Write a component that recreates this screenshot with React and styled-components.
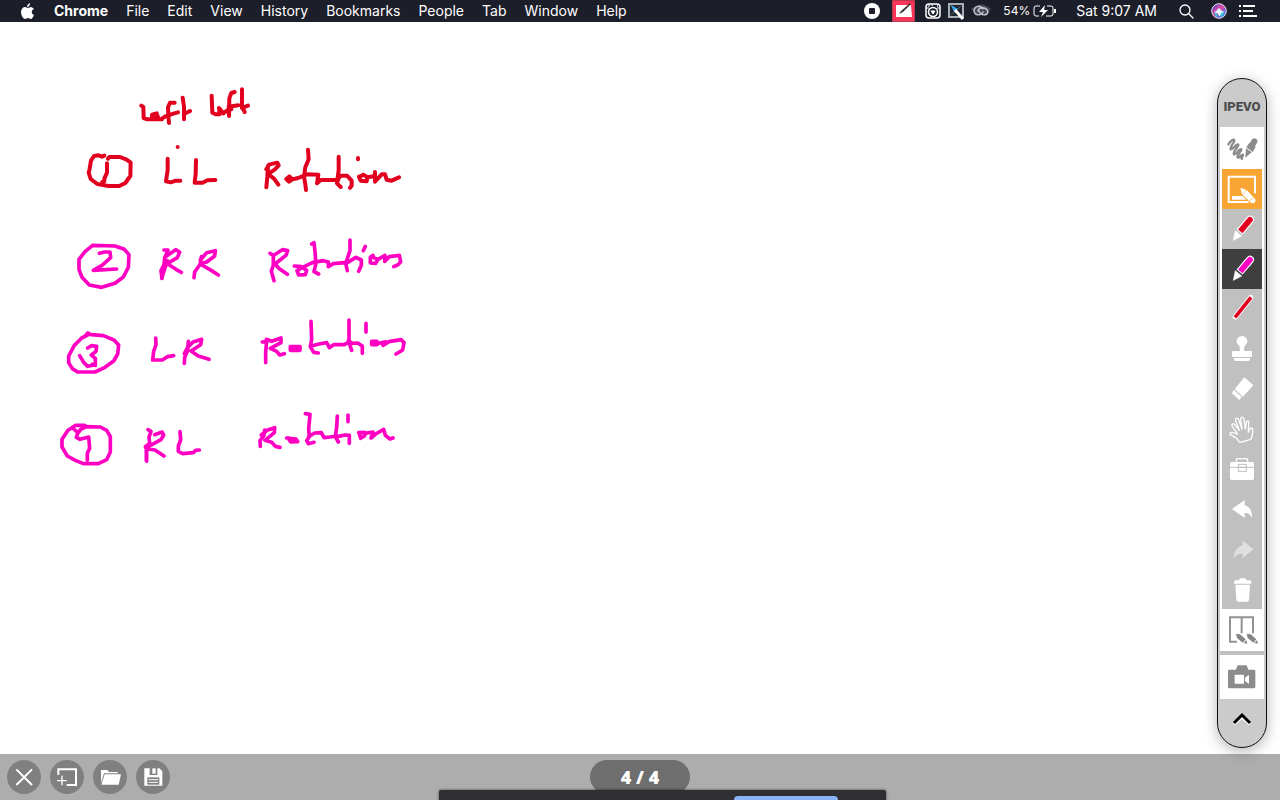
import React from "react";
import styled, { createGlobalStyle } from "styled-components";

const GlobalStyle = createGlobalStyle`
  * { box-sizing: border-box; }
  body { margin: 0; background: #fff; font-family: Inter, "Liberation Sans", sans-serif; }
  button { border: 0; padding: 0; font: inherit; color: inherit; background: none; cursor: pointer; }
  svg { display: block; flex: none; }
`;

const Screen = styled.div`
  position: relative;
  min-height: 100vh;
  display: flex;
  flex-direction: column;
  overflow: hidden;
`;

const MenuBar = styled.header`
  display: flex;
  align-items: center;
  justify-content: space-between;
  height: 22px;
  padding: 0 23px 0 20px;
  background: #1c1e29;
  color: #fff;
  font-size: 14px;
  line-height: 22px;
  white-space: nowrap;
`;

const Menus = styled.nav`
  display: flex;
  align-items: center;
  gap: 18px;
`;

const MenuItem = styled.button`
  font-weight: ${(p) => (p.$app ? 700 : 400)};
`;

const Status = styled.div`
  display: flex;
  align-items: center;
`;

const StatusItem = styled.button`
  display: flex;
  align-items: center;
  gap: 3px;
  height: 22px;
  margin-left: ${(p) => p.$space}px;
  font-size: ${(p) => (p.$small ? 12 : 14)}px;
`;

const Board = styled.main`
  flex: 1;
  background: #fff;
`;

const Rail = styled.aside`
  position: absolute;
  top: 78px;
  right: 13px;
  width: 50px;
  display: flex;
  flex-direction: column;
  border: 1px solid #111;
  border-radius: 25px;
  background: #cbcbcb;
  box-shadow: 0 3px 14px rgba(0, 0, 0, 0.3);
  padding: 0 2px;
`;

const Brand = styled.div`
  height: 48px;
  padding-top: 8px;
  text-align: center;
  font: 900 13px/40px Roboto, sans-serif;
  color: #4e4e4e;
`;

const WideTool = styled.button`
  display: grid;
  place-items: center;
  height: ${(p) => p.$height}px;
  background: #fff;
`;

const ToolStack = styled.div`
  display: flex;
  flex-direction: column;
  padding: 0 2px;
  background: #fff;
`;

const Tool = styled.button`
  height: 40px;
  background: ${(p) => p.$bg || "#c0c0c0"};
`;

const Divider = styled.div`
  height: 4px;
  background: #c0c0c0;
`;

const Collapse = styled.button`
  display: grid;
  place-items: center;
  height: 48px;
  padding-bottom: 8px;
`;

const BottomBar = styled.footer`
  display: grid;
  grid-template-columns: 1fr auto 1fr;
  align-items: start;
  height: 46px;
  padding: 6px 7px;
  background: #adadad;
`;

const Actions = styled.div`
  display: flex;
  gap: 9px;
`;

const RoundButton = styled.button`
  width: 34px;
  height: 34px;
  border-radius: 50%;
  background: #808080;
`;

const PageCount = styled.div`
  width: 100px;
  height: 34px;
  border-radius: 17px;
  background: #6e6e6e;
  color: #fff;
  text-align: center;
  font: 800 18px/35px "Open Sans", sans-serif;
`;

const SharePanel = styled.div`
  position: absolute;
  left: 50%;
  bottom: 0;
  width: 447px;
  height: 10px;
  margin-left: -201px;
  padding: 6px 48px 0 0;
  display: flex;
  justify-content: flex-end;
  border-radius: 2px 2px 0 0;
  background: #2e2e33;
  box-shadow: 0 0 3px rgba(0, 0, 0, 0.6);
`;

const ShareAction = styled.button`
  width: 104px;
  height: 4px;
  border-radius: 4px 4px 0 0;
  background: #8ab4f8;
`;

const RED = "#e2001f";
const PINK = "#ff00c3";

const ink = [
  {
    label: "Left left. 1. LL Rotation",
    color: RED,
    width: 12,
    at: "translate(70 80)",
    d: `M214 77L220 81L221 114L232 118H276M262 115L246 112V104L260 100L264 112M276 116L286 109L310 101L324 97
      M314 68L300 68L294 82L295 108L297 129M338 53L342 80V118M342 102L360 93
      M425 47L427 98L437 103H449L447 84L460 100L477 87L484 88M494 36L484 39L478 55L477 108M476 80L505 76
      M516 28V80L524 96M516 84L534 77
      M103 227L96 230L86 226L72 228L63 242L59 266L56 278L62 297L82 312L116 318H148L166 309L181 288L182 248L170 239L150 231H118L114 236
      M111 250V278L103 296V304L97 306M293 236V270L288 304L302 307L318 302H331M323 201V201
      M378 240L377 282L374 308H398L412 301L436 300
      M594 258L592 290L589 322M589 268L597 254L622 248L626 256L614 269L594 282L612 296L625 314
      M657 290L649 297L657 305L667 298L659 290M667 298L684 294L712 283L745 284L741 310L752 300H805
      M714 209L716 238L706 262L702 290L706 313L708 330
      M806 230V270L801 310L812 321M801 302L812 287H831L845 302V317L840 323M864 234V238
      M867 290L872 302L890 304L893 292L880 284L869 290M893 292L914 288L915 276V305L935 283H945L950 299L965 302L987 292`,
  },
  {
    label: "2. RR Rotation",
    color: PINK,
    width: 11,
    at: "translate(60 230)",
    d: `M98 46L165 48L193 58L207 74L205 112L190 141L165 160L125 172L88 165L66 142L57 118V88L75 65L98 46
      M118 70L134 66H150L152 83L126 106L100 121L170 117
      M312 60H324L314 84L312 104L303 122L306 145M305 145L313 120L322 92M320 78L347 59L359 66L352 83L322 101L348 118L364 127
      M424 80L421 102L404 126L402 143M421 90L440 68L466 62L464 78L440 96L420 102L450 119L475 135
      M630 70L640 76V105L634 124L642 152M644 74L667 59L683 62L678 76L645 102L658 116L682 133
      M703 108L724 110L740 121L736 134L716 135L711 122L728 112L757 98L790 92L805 96V110L820 101L862 97
      M755 42L762 38L766 74L767 104L762 125L776 132
      M870 30V62L857 100L862 122M862 98L888 82L904 90V106L896 124M916 49L910 62
      M939 76L931 82V99L947 100L954 88L939 82M954 88L975 76L974 94L988 80L1018 76L1022 96L1013 105L1001 110`,
  },
  {
    label: "3. LR Rotation",
    color: PINK,
    width: 11,
    at: "translate(55 310)",
    d: `M92 76L98 69L108 74L145 77L177 90L191 105L188 132L176 153L150 172L120 186H68L52 176L41 158V138L58 106L80 84L98 75
      M98 114L110 107L125 109L123 124L109 135L121 145V164L98 169L86 157L74 137M112 163L121 166
      M302 84L303 104L296 124L293 150H322L337 140L356 137
      M400 94L398 122L389 142L388 160M388 131L398 112L414 96L440 88L437 104L408 123L430 138L462 148
      M622 96L635 94L632 125V158M634 88L650 94L678 84V98L646 115L665 124L674 135L688 131
      M706 110H735V121H706V110M768 34L770 88L766 110L776 127L790 129
      M770 108L792 102L815 98L823 113L836 104H868L882 96M882 30V98L890 121M880 92L892 100L908 99L922 108V130
      M933 40V66M950 94H966V104H950V96H964M966 101L991 95L984 106L1002 95L1038 89L1047 98L1043 120L1023 132`,
  },
  {
    label: "4. RL Rotation",
    color: PINK,
    width: 11,
    at: "translate(50 400)",
    d: `M104 76H77L54 91L36 118V141L52 168L76 181L100 191H145L170 179L181 156V110L170 91L151 81L110 80L92 88L82 102M70 86L84 98L79 112L90 118L116 111L119 145L112 160V181
      M294 89L303 94L297 112L299 130L286 140L290 150V184M314 104L336 96L341 105L333 119L289 143M294 147L315 150L342 168M289 148V182
      M390 95L392 120L385 138V154L398 161L430 158L437 151L448 150
      M644 90L642 106L630 122L631 139M634 105L651 91L674 83L673 98L645 121L665 127L676 139L690 142
      M710 114L738 117L743 125L722 126L714 114M766 41L780 43L776 88L778 110L770 122L775 131L792 127
      M776 110L794 99L814 98L822 113L840 111L862 108M862 48L860 82L856 110L865 126M862 110L885 105L898 106V130
      M894 45V65M926 98L944 97V107L932 115L927 98M944 100L969 96L963 114L977 102L1001 88L1006 106L1020 117L1029 114`,
  },
];

const Handwriting = () => (
  <svg width="440" height="480" viewBox="0 22 440 480" role="img" aria-label="Handwritten notes">
    {ink.map((line) => (
      <g key={line.label} transform={`${line.at} scale(.33333)`} aria-label={line.label}>
        <path d={line.d} fill="none" stroke={line.color} strokeWidth={line.width} strokeLinecap="round" strokeLinejoin="round" />
      </g>
    ))}
  </svg>
);

const Glyph = ({ children, w = 40, h = 40 }) => (
  <svg width={w} height={h} viewBox={`0 0 ${w * 3} ${h * 3}`} fill="#fff" aria-hidden="true">
    {children}
  </svg>
);

const PenIcon = ({ color }) => (
  <Glyph>
    <path d="M84 32L76 42" stroke="#fff" strokeWidth="24" strokeLinecap="round" />
    <path d="M78 39L53 69" stroke="#fff" strokeWidth="24" />
    <path d="M84 32L76 42" stroke={color} strokeWidth="17" strokeLinecap="round" />
    <path d="M78 39L55 67" stroke={color} strokeWidth="17" />
    <path d="M40 65L59 81L34 94Z" stroke="#fff" strokeWidth="2" strokeLinejoin="round" />
  </Glyph>
);

const tools = [
  {
    name: "Whiteboard",
    bg: "#f8a534",
    icon: (
      <Glyph>
        <path d="M80 99H20V23H99V73" fill="none" stroke="#fff" strokeWidth="6" />
        <path d="M30 81H62L73 92H30Z" />
        <path d="M55 56L74 63L100 91Q103 96 97 101Q91 105 87 101L60 76Z" />
        <path d="M61 76L74 64M82 96L95 84" stroke="#f8a534" strokeWidth="2" />
      </Glyph>
    ),
  },
  { name: "Red pen", icon: <PenIcon color={RED} /> },
  { name: "Pink pen", bg: "#3f3f3f", icon: <PenIcon color={PINK} /> },
  {
    name: "Line",
    icon: (
      <Glyph>
        <path d="M86 26L40 84" stroke="#fff" strokeWidth="16" strokeLinecap="round" />
        <path d="M87 25L39 85" stroke={RED} strokeWidth="11" />
      </Glyph>
    ),
  },
  {
    name: "Stamp",
    icon: (
      <Glyph>
        <circle cx="60" cy="37" r="16" />
        <path d="M52 46H68L66 66H54Z" />
        <rect x="30" y="66" width="60" height="18" rx="4" />
        <path d="M36 87H84V91Q84 96 79 96H41Q36 96 36 91Z" />
      </Glyph>
    ),
  },
  {
    name: "Eraser",
    icon: (
      <Glyph>
        <path d="M67 25L94 49L63 83L38 60Z" />
        <path d="M35 62L59 84L52 93L30 73Z" />
      </Glyph>
    ),
  },
  {
    name: "Pan",
    icon: (
      <Glyph>
        <path
          d="M51 98C45 86 34 82 25 77C22 70 30 68 37 72L47 76L30 51C28 43 36 42 40 49L52 64L40 33C40 26 47 25 50 32L60 60L56 29C58 22 65 23 66 30L70 60L73 40C75 33 81 35 80 41L79 70C82 62 86 54 91 58C95 64 91 78 88 89C82 96 72 94 64 98Q54 101 51 98Z"
          fill="none" stroke="#fff" strokeWidth="4" strokeLinejoin="round"
        />
      </Glyph>
    ),
  },
  {
    name: "Tools",
    icon: (
      <Glyph>
        <path d="M43 38V34Q43 29 49 29H71Q77 29 77 34V38" fill="none" stroke="#fff" strokeWidth="4" />
        <rect x="24" y="39" width="72" height="54" rx="5" />
        <path d="M24 55H96" stroke="#c0c0c0" strokeWidth="3" />
        <rect x="49" y="46" width="24" height="21" fill="none" stroke="#c0c0c0" strokeWidth="3" />
        <path d="M51 55H72" stroke="#c0c0c0" strokeWidth="3" />
      </Glyph>
    ),
  },
  { name: "Undo", icon: <Glyph><path d="M30 60L68 33V49C84 53 91 68 90 86C84 75 78 72 68 72V87Z" /></Glyph> },
  { name: "Redo", icon: <Glyph><path opacity=".5" d="M94 61L62 34V49C46 53 36 68 34 88C42 77 50 74 62 74V88Z" /></Glyph> },
  {
    name: "Delete",
    icon: (
      <Glyph>
        <path d="M52 31Q52 28 55 28H69Q72 28 72 31V34H83Q88 34 88 39V44H36V39Q36 34 41 34H52Z" />
        <path d="M40 47H84L81 93Q80 98 75 98H49Q44 98 43 93Z" />
      </Glyph>
    ),
  },
];

export default function App() {
  return (
    <Screen>
      <GlobalStyle />
      <MenuBar>
        <Menus aria-label="Application menu">
          <MenuItem aria-label="Apple">
            <svg width="16" height="18" viewBox="0 0 16 18" fill="#fff">
              <path d="M10 1C10 3 9 5 7 5C7 3 8 2 10 1ZM8 6C9 6 10 5 11 5C12 5 13 6 14 7C11 8 11 12 14 13C13 15 12 17 11 17C10 17 9 16 8 16C7 16 6 17 5 17C3 17 1 13 1 10C1 7 3 5 5 5C6 5 7 6 8 6Z" />
            </svg>
          </MenuItem>
          <MenuItem $app>Chrome</MenuItem>
          {["File", "Edit", "View", "History", "Bookmarks", "People", "Tab", "Window", "Help"].map((m) => (
            <MenuItem key={m}>{m}</MenuItem>
          ))}
        </Menus>
        <Status>
          <StatusItem $space={0} aria-label="Recording">
            <svg width="16" height="16" viewBox="0 0 16 16">
              <circle cx="8" cy="8" r="8" fill="#fff" />
              <rect x="5" y="5" width="6" height="6" rx="1" fill="#1c1e29" />
            </svg>
          </StatusItem>
          <StatusItem $space={12} aria-label="Annotator">
            <svg width="23" height="22" viewBox="0 0 23 22">
              <rect width="23" height="22" fill="#b43a52" />
              <rect x="1" y="1" width="21" height="20" fill="#fb3558" />
              <path d="M4 5H19L20 17H4Z" fill="#fff" />
              <path d="M7 14L9 11L18 3L19 4L11 12Z" fill="#3c3036" />
            </svg>
          </StatusItem>
          <StatusItem $space={10} aria-label="Camera">
            <svg width="16" height="16" viewBox="0 0 16 16" fill="none" stroke="#fff">
              <rect x="1" y="1" width="14" height="14" rx="3" strokeWidth="1.5" />
              <path d="M1 5H4M12 5H15M4 1V4M7 1V3" strokeWidth="1" />
              <circle cx="8" cy="9" r="4.5" fill="#1c1e29" strokeWidth="1.5" />
              <path d="M8 11L6 8H10Z" fill="#fff" strokeWidth="1" />
              <path d="M12 3H13" strokeWidth="1.5" />
            </svg>
          </StatusItem>
          <StatusItem $space={7} aria-label="Whiteboard">
            <svg width="17" height="18" viewBox="0 0 17 18">
              <rect x="1" y="2" width="14" height="13" fill="#20242f" stroke="#aab0b8" strokeWidth="2" />
              <path d="M3 13L13 4M3 4L12 13" stroke="#546675" strokeWidth="1" />
              <path d="M3 3L10 7L6 10Z" fill="#3aa9f5" />
              <path d="M7 8L15 17" stroke="#fff" strokeWidth="3" />
            </svg>
          </StatusItem>
          <StatusItem $space={6} aria-label="Creative Cloud">
            <svg width="20" height="16" viewBox="0 0 20 16" fill="none">
              <path d="M0 6Q10 -3 20 6L14 12H7Z" fill="#484b55" />
              <path d="M12 6C9 1 3 4 3 8C4 13 10 13 12 9M7 8C8 3 16 4 17 9C16 13 10 13 8 8" stroke="#c4c7ce" strokeWidth="1.4" strokeLinecap="round" />
            </svg>
          </StatusItem>
          <StatusItem $space={12} $small>
            <span>54%</span>
            <svg width="24" height="14" viewBox="0 0 24 14" fill="none" stroke="#fff">
              <path d="M7 2H3Q1 2 1 4V10Q1 12 3 12H6M14 2H18Q20 2 20 4V10Q20 12 18 12H13" />
              <path d="M12 1L6 8H10L8 13L15 6H11Z" fill="#fff" stroke="none" />
              <path d="M22 5V9" strokeWidth="2" />
            </svg>
          </StatusItem>
          <StatusItem $space={19}>Sat 9:07 AM</StatusItem>
          <StatusItem $space={22} aria-label="Search">
            <svg width="15" height="15" viewBox="0 0 15 15" fill="none" stroke="#fff" strokeWidth="1.3">
              <circle cx="6" cy="6" r="5" />
              <path d="M10 10L14 14" strokeLinecap="round" />
            </svg>
          </StatusItem>
          <StatusItem $space={17} aria-label="Siri">
            <svg width="16" height="16" viewBox="0 0 16 16">
              <defs>
                <linearGradient id="siri" x1="0" y1="0" x2="1" y2="1">
                  <stop offset=".1" stopColor="#5440c8" />
                  <stop offset=".45" stopColor="#e64d9d" />
                  <stop offset=".7" stopColor="#7359dd" />
                  <stop offset="1" stopColor="#25c9df" />
                </linearGradient>
              </defs>
              <circle cx="8" cy="8" r="7.3" fill="url(#siri)" stroke="#e4e0ec" />
              <path d="M3 10Q6 9 7 14Q4 13 3 10ZM13 9Q10 9 9 14Q13 13 13 9Z" fill="#28c9dd" />
              <path d="M3 9Q6 8 8 5Q10 8 14 9Q10 9 9 13H8Q8 10 3 9Z" fill="#dffcff" />
            </svg>
          </StatusItem>
          <StatusItem $space={12} aria-label="Notification center">
            <svg width="18" height="12" viewBox="0 0 18 12" stroke="#fff" strokeWidth="2">
              <path d="M0 1H2M0 6H2M0 11H2M4 1H16M4 6H14M4 11H18" />
            </svg>
          </StatusItem>
        </Status>
      </MenuBar>

      <Board>
        <Handwriting />
      </Board>

      <Rail aria-label="Annotation tools">
        <Brand>IPEVO</Brand>
        <WideTool $height={42} aria-label="Draw on desktop">
          <svg width="44" height="42" viewBox="0 0 132 126" fill="#8b8b8b">
            <path d="M25 52C32 41 42 34 43 41C43 47 29 59 32 67C36 70 51 48 55 53C57 59 37 74 42 82C48 85 59 62 64 67C65 73 49 84 53 91C57 96 65 80 69 83C71 87 61 91 66 96" fill="none" stroke="#8b8b8b" strokeWidth="7" strokeLinecap="round" />
            <path d="M103 43L94 58" stroke="#8b8b8b" strokeWidth="18" strokeLinecap="round" />
            <path d="M88 47L107 60L98 75L79 61Z" />
            <path d="M78 64L95 76L76 92Z" />
          </svg>
        </WideTool>
        <ToolStack>
          {tools.map((t) => (
            <Tool key={t.name} $bg={t.bg} aria-label={t.name}>{t.icon}</Tool>
          ))}
        </ToolStack>
        <WideTool $height={42} aria-label="Split screen">
          <svg width="44" height="42" viewBox="0 0 132 126" fill="#858585">
            <path d="M51 98H30V25H99V73M65 25V73" fill="none" stroke="#929292" strokeWidth="6" />
            <path d="M48 74L60 76L77 91L68 101L51 87ZM71 102L79 93L82 104Z" />
            <path d="M80 74L92 76L109 91L100 101L83 87ZM103 102L111 93L114 104Z" />
          </svg>
        </WideTool>
        <Divider />
        <WideTool $height={44} aria-label="Record or capture">
          <svg width="44" height="44" viewBox="0 0 132 132" fill="#8c8c8c">
            <path d="M28 44H47L53 31H80L85 44H102Q106 44 106 48V96Q106 100 102 100H28Q24 100 24 96V48Q24 44 28 44Z" />
            <rect x="44" y="59" width="28" height="27" rx="2" fill="#fff" />
            <path d="M75 68L87 59V87L75 78Z" fill="#fff" />
          </svg>
        </WideTool>
        <Collapse aria-label="Collapse toolbar">
          <svg width="20" height="14" viewBox="0 0 20 14" fill="none">
            <path d="M2 12L10 5L18 12" stroke="#fff" strokeWidth="3" />
            <path d="M2 11L10 3L18 11" stroke="#000" strokeWidth="3" />
          </svg>
        </Collapse>
      </Rail>

      <BottomBar>
        <Actions>
          <RoundButton aria-label="Close">
            <Glyph w={34} h={34}><path d="M28 28L75 75M75 28L28 75" stroke="#fff" strokeWidth="6" /></Glyph>
          </RoundButton>
          <RoundButton aria-label="Add page">
            <Glyph w={34} h={34}>
              <path d="M25 44V28H78V75H50" fill="none" stroke="#fff" strokeWidth="6" />
              <path d="M21 62H50M36 47V76" stroke="#fff" strokeWidth="4" />
            </Glyph>
          </RoundButton>
          <RoundButton aria-label="Open">
            <Glyph w={34} h={34}>
              <path d="M24 30H43L48 36H74V40H33L24 68Z" />
              <path d="M35 43H84L77 74H25Z" />
            </Glyph>
          </RoundButton>
          <RoundButton aria-label="Save">
            <Glyph w={34} h={34}>
              <path d="M25 25H41V45H64V25H70L79 34V77H25Z" />
              <path d="M49 25H59V41H49Z" />
              <path d="M34 52H70V74H34Z" fill="#808080" />
              <path d="M38 59H66M38 67H66" stroke="#fff" strokeWidth="3" />
            </Glyph>
          </RoundButton>
        </Actions>
        <PageCount>4 / 4</PageCount>
      </BottomBar>

      <SharePanel>
        <ShareAction aria-label="Stop sharing" />
      </SharePanel>
    </Screen>
  );
}
